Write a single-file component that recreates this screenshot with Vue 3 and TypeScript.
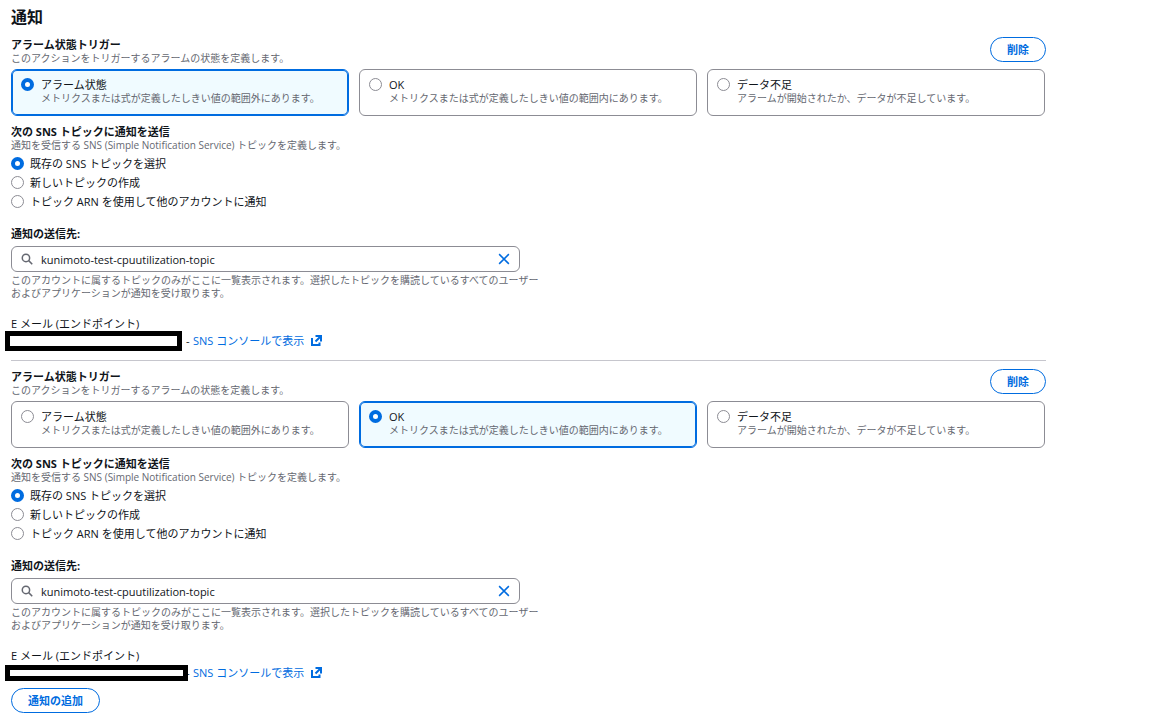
<script setup lang="ts">
import { reactive } from 'vue'

interface Choice {
  value: string
  label: string
  description?: string
}

interface Notification {
  id: number
  state: string
  target: string
  topic: string
}

const states: Choice[] = [
  { value: 'alarm', label: 'アラーム状態', description: 'メトリクスまたは式が定義したしきい値の範囲外にあります。' },
  { value: 'ok', label: 'OK', description: 'メトリクスまたは式が定義したしきい値の範囲内にあります。' },
  { value: 'insufficient', label: 'データ不足', description: 'アラームが開始されたか、データが不足しています。' },
]

const targets: Choice[] = [
  { value: 'existing', label: '既存の SNS トピックを選択' },
  { value: 'new', label: '新しいトピックの作成' },
  { value: 'arn', label: 'トピック ARN を使用して他のアカウントに通知' },
]

const notifications = reactive<Notification[]>([
  { id: 1, state: 'alarm', target: 'existing', topic: 'kunimoto-test-cpuutilization-topic' },
  { id: 2, state: 'ok', target: 'existing', topic: 'kunimoto-test-cpuutilization-topic' },
])

function remove(index: number) {
  notifications.splice(index, 1)
}

function add() {
  const id = Math.max(0, ...notifications.map((n) => n.id)) + 1
  notifications.push({ id, state: 'alarm', target: 'existing', topic: '' })
}
</script>

<template>
  <main class="page">
    <h1 class="title">通知</h1>

    <section v-for="(item, index) in notifications" :key="item.id" class="notification">
      <header class="head">
        <div>
          <h2 :id="`state-${item.id}`" class="label">アラーム状態トリガー</h2>
          <p class="note">このアクションをトリガーするアラームの状態を定義します。</p>
        </div>
        <button type="button" class="button" @click="remove(index)">削除</button>
      </header>

      <div class="tiles" role="radiogroup" :aria-labelledby="`state-${item.id}`">
        <label
          v-for="state in states"
          :key="state.value"
          class="tile"
          :class="{ selected: item.state === state.value }"
        >
          <input v-model="item.state" class="radio" type="radio" :name="`state-${item.id}`" :value="state.value" />
          <span class="tile-text">
            <span class="tile-label">{{ state.label }}</span>
            <span class="note">{{ state.description }}</span>
          </span>
        </label>
      </div>

      <h2 :id="`target-${item.id}`" class="label">次の SNS トピックに通知を送信</h2>
      <p class="note">通知を受信する SNS (Simple Notification Service) トピックを定義します。</p>
      <div class="targets" role="radiogroup" :aria-labelledby="`target-${item.id}`">
        <label v-for="target in targets" :key="target.value" class="target">
          <input v-model="item.target" class="radio" type="radio" :name="`target-${item.id}`" :value="target.value" />
          <span>{{ target.label }}</span>
        </label>
      </div>

      <label class="label" :for="`topic-${item.id}`">通知の送信先:</label>
      <div class="search">
        <svg class="icon" viewBox="0 0 16 16" aria-hidden="true">
          <circle cx="6.6" cy="6.6" r="4.9" />
          <path d="M10.2 10.2 15 15" />
        </svg>
        <input :id="`topic-${item.id}`" v-model="item.topic" class="search-input" type="text" />
        <button type="button" class="clear" aria-label="クリア" @click="item.topic = ''">
          <svg class="icon" viewBox="0 0 16 16" aria-hidden="true"><path d="m1.5 1.5 13 13m0-13-13 13" /></svg>
        </button>
      </div>
      <p class="note hint">
        このアカウントに属するトピックのみがここに一覧表示されます。選択したトピックを購読しているすべてのユーザー<br />およびアプリケーションが通知を受け取ります。
      </p>

      <h3 class="label plain">E メール (エンドポイント)</h3>
      <div class="endpoint">
        <span class="email"><span class="mask" :class="{ slim: index === 1 }"></span></span>
        <span class="dash">-</span>
        <a class="link" href="#">
          SNS コンソールで表示
          <svg class="external" viewBox="0 0 11 11" aria-hidden="true">
            <path d="M1 3v7h7.500V7.500" />
            <path d="M4.500 1H10v5.500M10 1 4.500 6.500" />
          </svg>
        </a>
      </div>
    </section>

    <button type="button" class="button add" @click="add">通知の追加</button>
  </main>
</template>

<style>
body {
  margin: 0;
  background: #fff;
}
</style>

<style scoped>
.page {
  padding: 7px 106px 9px 11px;
  color: #0f141a;
  font-family: 'Open Sans', 'Noto Sans CJK JP', sans-serif;
  font-size: 11px;
  line-height: 15px;
}

.title {
  margin: 0 0 10px;
  font-size: 16px;
  line-height: 20px;
  font-weight: 700;
}

.notification + .notification {
  margin-top: 11px;
  padding-top: 8px;
  border-top: 1px solid #c6c6cd;
}

.head {
  display: flex;
  justify-content: space-between;
  align-items: flex-start;
}

.label {
  display: block;
  margin: 0;
  font-size: 11px;
  line-height: 15px;
  font-weight: 700;
}

.plain {
  font-weight: 400;
}

.note {
  display: block;
  margin: 0;
  color: #656871;
  font-size: 10px;
  line-height: 13px;
}

.button {
  box-sizing: border-box;
  height: 25px;
  padding: 0 16px;
  border: 1px solid #006ce0;
  border-radius: 13px;
  background: #fff;
  color: #006ce0;
  font: inherit;
  font-weight: 700;
  cursor: pointer;
}

.tiles {
  display: grid;
  grid-template-columns: repeat(3, 1fr);
  gap: 10px;
  margin: 4px 1px 8px 0;
}

.tile {
  display: flex;
  gap: 7px;
  padding: 8px 9px 10px;
  border: 1px solid #8c8c94;
  border-radius: 6px;
}

.tile.selected {
  border-color: #006ce0;
  background: #f0fbff;
  box-shadow: inset 0 0 0 1px #006ce0;
}

.tile-label {
  display: block;
  line-height: 14px;
}

.radio {
  appearance: none;
  box-sizing: border-box;
  flex: none;
  width: 13px;
  height: 13px;
  margin: 0;
  border: 1px solid #8c8c94;
  border-radius: 50%;
  background: #fff;
}

.radio:checked {
  border: 4px solid #006ce0;
}

.targets {
  margin: 2px 0 15px;
}

.target {
  display: flex;
  align-items: center;
  gap: 6px;
  height: 19px;
}

.search {
  box-sizing: border-box;
  display: flex;
  align-items: center;
  gap: 8px;
  width: calc(50% - 9px);
  min-width: 240px;
  height: 26px;
  margin: 5px 0 2px;
  padding: 0 9px;
  border: 1px solid #8c8c94;
  border-radius: 6px;
}

.icon {
  display: block;
  flex: none;
  width: 12px;
  height: 12px;
  fill: none;
  stroke: #656871;
  stroke-width: 2;
}

.search-input {
  flex: 1;
  min-width: 0;
  height: 15px;
  padding: 0;
  border: 0;
  outline: 0;
  background: none;
  color: inherit;
  font: inherit;
}

.clear {
  padding: 0;
  border: 0;
  background: none;
  cursor: pointer;
}

.clear .icon {
  stroke: #006ce0;
}

.hint {
  margin-bottom: 16px;
}

.endpoint {
  display: flex;
  align-items: center;
  height: 18px;
}

.email {
  position: relative;
  align-self: stretch;
  width: 175px;
}

.mask {
  position: absolute;
  top: 0;
  left: -6px;
  box-sizing: border-box;
  width: 177px;
  height: 20px;
  border: 5px solid #000;
  background: #fff;
}

.mask.slim {
  top: 2px;
  width: 183px;
  height: 16px;
}

.dash {
  width: 7px;
}

.link {
  display: flex;
  align-items: center;
  gap: 7px;
  color: #006ce0;
  text-decoration: none;
}

.external {
  width: 11px;
  height: 11px;
  fill: none;
  stroke: #006ce0;
  stroke-width: 2;
}

.add {
  display: block;
  margin-top: 7px;
}
</style>
